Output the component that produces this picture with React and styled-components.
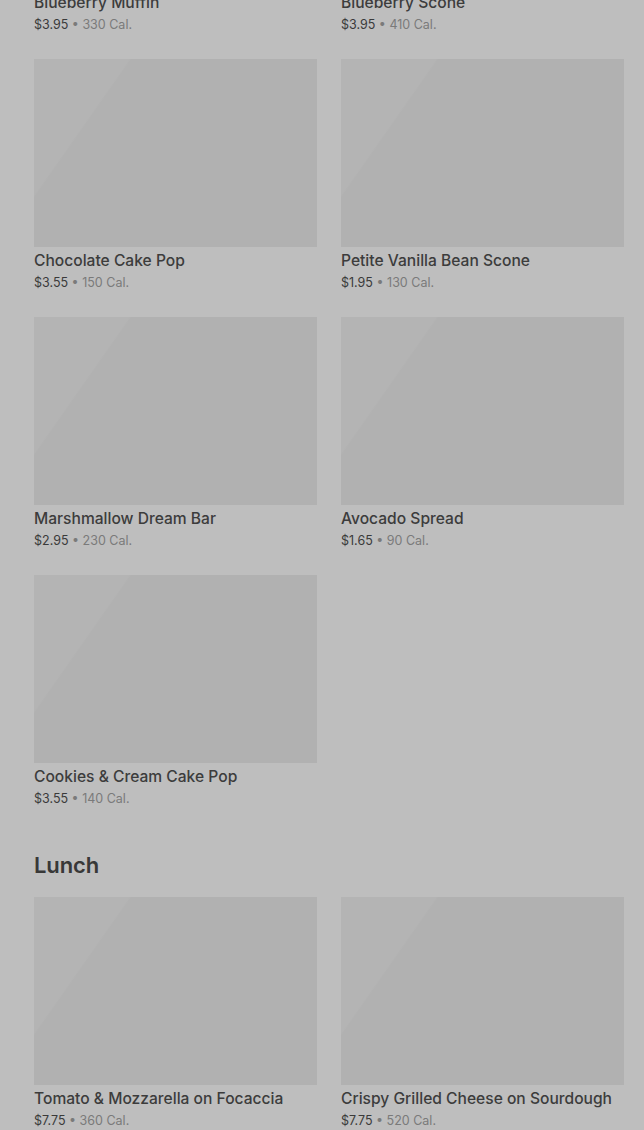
import styled, { createGlobalStyle } from "styled-components";

const GlobalStyle = createGlobalStyle`
    html, body {
        margin: 0;
        padding: 0;
        background: #bebebe;
        overflow: hidden;
    }
    body {
        font-family: Inter, "Noto Sans", sans-serif;
        color: #333;
    }
`;

const Page = styled.main`
    padding: 0 20px 0 34px;
    margin-top: -199px;
`;

const Section = styled.section`
    & + & {
        margin-top: 41px;
    }
`;

const Heading = styled.h2`
    margin: 0 0 16px;
    font-size: 22px;
    line-height: 32px;
    font-weight: 600;
    color: #383838;
    letter-spacing: -0.1px;
`;

const Grid = styled.div`
    display: grid;
    grid-template-columns: 1fr 1fr;
    column-gap: 24px;
    row-gap: 25px;
`;

const Card = styled.div`
    display: flex;
    flex-direction: column;
`;

const Thumb = styled.div`
    height: 188px;
    background: linear-gradient(125deg, #b4b4b4 0%, #b4b4b4 23%, #b1b1b1 23.5%, #b1b1b1 100%);
`;

const Name = styled.div`
    margin-top: 2px;
    font-size: 15.6px;
    line-height: 24px;
    font-weight: 500;
    color: #3c3c3c;
    white-space: nowrap;
`;

const Meta = styled.div`
    margin-bottom: -1px;
    font-size: 12.5px;
    line-height: 20px;
    color: #3a3a3a;
`;

const Cal = styled.span`
    color: #7a7a7a;
`;

const breakfast = [
    { name: "Blueberry Muffin", price: "$3.95", cal: 330 },
    { name: "Blueberry Scone", price: "$3.95", cal: 410 },
    { name: "Chocolate Cake Pop", price: "$3.55", cal: 150 },
    { name: "Petite Vanilla Bean Scone", price: "$1.95", cal: 130 },
    { name: "Marshmallow Dream Bar", price: "$2.95", cal: 230 },
    { name: "Avocado Spread", price: "$1.65", cal: 90 },
    { name: "Cookies & Cream Cake Pop", price: "$3.55", cal: 140 }
];

const lunch = [
    { name: "Tomato & Mozzarella on Focaccia", price: "$7.75", cal: 360 },
    { name: "Crispy Grilled Cheese on Sourdough", price: "$7.75", cal: 520 }
];

function ItemCard({ item }) {
    return (
        <Card>
            <Thumb />
            <Name>{item.name}</Name>
            <Meta>
                {item.price} <Cal>• {item.cal} Cal.</Cal>
            </Meta>
        </Card>
    );
}

export default function App() {
    return (
        <>
            <GlobalStyle />
            <Page>
                <Section>
                    <Grid>
                        {breakfast.map((item) => (
                            <ItemCard key={item.name} item={item} />
                        ))}
                    </Grid>
                </Section>
                <Section>
                    <Heading>Lunch</Heading>
                    <Grid>
                        {lunch.map((item) => (
                            <ItemCard key={item.name} item={item} />
                        ))}
                    </Grid>
                </Section>
            </Page>
        </>
    );
}
